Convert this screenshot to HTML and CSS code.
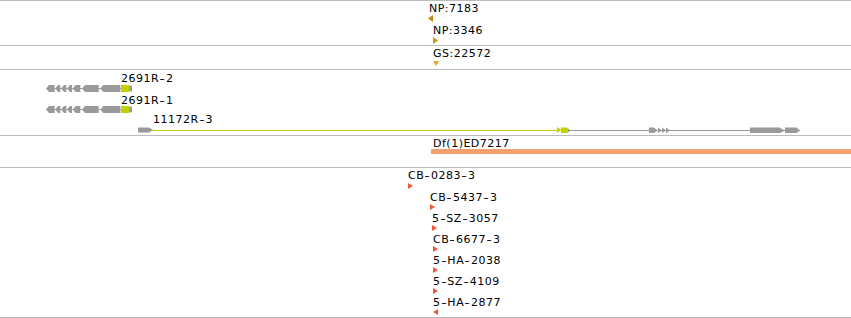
FILE: index.html
```html
<!DOCTYPE html>
<html lang="en">
<head>
    <meta charset="UTF-8">
    <title>Track view</title>
    <link rel="stylesheet" href="styles.css">
</head>
<body>
    <div class="panel">
        <!-- protein / genomic hits -->
        <div class="track t1">
            <span class="label" style="left:429px;top:0px">NP:7183</span>
            <svg class="mark" style="left:428px;top:14px" width="6" height="7"><polygon points="0,3.5 5,0 5,7" fill="#c8860a"/></svg>
            <span class="label" style="left:433px;top:22px">NP:3346</span>
            <svg class="mark" style="left:433px;top:36px" width="6" height="7"><polygon points="0,0 5,3.5 0,7" fill="#d4950e"/></svg>
        </div>

        <div class="track t2">
            <span class="label" style="left:433px;top:0px">GS:22572</span>
            <svg class="mark" style="left:433px;top:15px" width="6" height="6"><polygon points="0,0 6,0 3,5" fill="#f0a328"/></svg>
        </div>

        <!-- gene models -->
        <div class="track t3">
            <span class="label" style="left:121px;top:1px">2691R<span class="dash">-</span>2</span>
            <svg class="mark" style="left:44px;top:15px" width="90" height="7">
                <line x1="2" y1="3.5" x2="88" y2="3.5" stroke="#9a9a9a"/>
                <g fill="#9a9a9a">
                    <polygon points="2,3.5 5,0 10.7,0 10.7,7 5,7"/>
                    <polygon points="11.3,3.5 14,0 16.3,0 16.3,7 14,7"/>
                    <polygon points="17,3.5 20,0 22.3,0 22.3,7 20,7"/>
                    <polygon points="23,3.5 26,0 28,0 28,7 26,7"/>
                    <polygon points="28.7,3.5 31.7,0 36.3,0 36.3,7 31.7,7"/>
                    <polygon points="38,3.5 41,0 54.7,0 54.7,7 41,7"/>
                    <polygon points="56.3,3.5 59.3,0 76.3,0 76.3,7 59.3,7"/>
                    <polygon points="85,1 88,0.5 88,6.5 85,6"/>
                </g>
                <rect x="77" y="0" width="8.3" height="7" fill="#c3d100"/>
            </svg>
            <span class="label" style="left:121px;top:23px">2691R<span class="dash">-</span>1</span>
            <svg class="mark" style="left:44px;top:36px" width="90" height="7">
                <line x1="2" y1="3.5" x2="88" y2="3.5" stroke="#9a9a9a"/>
                <g fill="#9a9a9a">
                    <polygon points="2,3.5 5,0 10.7,0 10.7,7 5,7"/>
                    <polygon points="11.3,3.5 14,0 16.3,0 16.3,7 14,7"/>
                    <polygon points="17,3.5 20,0 22.3,0 22.3,7 20,7"/>
                    <polygon points="23,3.5 26,0 28,0 28,7 26,7"/>
                    <polygon points="28.7,3.5 31.7,0 36.3,0 36.3,7 31.7,7"/>
                    <polygon points="38,3.5 41,0 54.7,0 54.7,7 41,7"/>
                    <polygon points="56.3,3.5 59.3,0 76.3,0 76.3,7 59.3,7"/>
                    <polygon points="85,1 88,0.5 88,6.5 85,6"/>
                </g>
                <rect x="77" y="0" width="8.3" height="7" fill="#c3d100"/>
            </svg>
            <span class="label" style="left:153px;top:42px">11172R<span class="dash">-</span>3</span>
            <svg class="mark" style="left:0;top:54px" width="851" height="12">
                <line x1="148" y1="6.5" x2="557" y2="6.5" stroke="#c3d100"/>
                <line x1="570" y1="6.5" x2="800" y2="6.5" stroke="#9a9a9a"/>
                <polygon points="138,3.5 149,3.5 153,6 149,8.5 138,8.5" fill="#9a9a9a"/>
                <g fill="#c3d100">
                    <polygon points="557,3 561.5,6 557,9"/>
                    <rect x="561" y="3.5" width="6.5" height="5.5"/>
                </g>
                <g fill="#9a9a9a">
                    <polygon points="567.5,4 570.5,6.5 567.5,9"/>
                    <polygon points="649,3.5 654,3.5 657.5,6.5 654,9 649,9"/>
                    <polygon points="658,3.5 662,6.5 658,9"/>
                    <polygon points="662,3.5 666,6.5 662,9"/>
                    <polygon points="666,3.5 670,6.5 666,9"/>
                    <polygon points="750,3.5 780,3.5 780,4 785,6.5 780,9 750,9"/>
                    <polygon points="785,3.5 796.5,3.5 800,6.5 796.5,9 785,9"/>
                </g>
            </svg>
        </div>

        <!-- deficiency -->
        <div class="track t4">
            <span class="label" style="left:433px;top:0px">Df(1)ED7217</span>
            <div class="df-bar" style="left:431px;top:13px"></div>
        </div>

        <!-- insertions -->
        <div class="track t5">
            <span class="label" style="left:408px;top:0px">CB<span class="dash">-</span>0283<span class="dash">-</span>3</span>
            <svg class="mark" style="left:408px;top:15px" width="6" height="6"><polygon points="0,0 5,3 0,6" fill="#f0583a"/></svg>
            <span class="label" style="left:430px;top:22px">CB<span class="dash">-</span>5437<span class="dash">-</span>3</span>
            <svg class="mark" style="left:430px;top:36px" width="6" height="6"><polygon points="0,0 5,3 0,6" fill="#f0583a"/></svg>
            <span class="label" style="left:432px;top:43px">5<span class="dash">-</span>SZ<span class="dash">-</span>3057</span>
            <svg class="mark" style="left:432px;top:57px" width="6" height="6"><polygon points="0,0 5,3 0,6" fill="#f0583a"/></svg>
            <span class="label" style="left:433px;top:64px">CB<span class="dash">-</span>6677<span class="dash">-</span>3</span>
            <svg class="mark" style="left:433px;top:78px" width="6" height="6"><polygon points="0,0 5,3 0,6" fill="#f0583a"/></svg>
            <span class="label" style="left:433px;top:85px">5<span class="dash">-</span>HA<span class="dash">-</span>2038</span>
            <svg class="mark" style="left:433px;top:99px" width="6" height="6"><polygon points="0,0 5,3 0,6" fill="#f0583a"/></svg>
            <span class="label" style="left:433px;top:106px">5<span class="dash">-</span>SZ<span class="dash">-</span>4109</span>
            <svg class="mark" style="left:433px;top:120px" width="6" height="6"><polygon points="0,0 5,3 0,6" fill="#f0583a"/></svg>
            <span class="label" style="left:433px;top:127px">5<span class="dash">-</span>HA<span class="dash">-</span>2877</span>
            <svg class="mark" style="left:433px;top:141px" width="6" height="6"><polygon points="5,0 0,3 5,6" fill="#f0583a"/></svg>
        </div>
    </div>
</body>
</html>
```

FILE: styles.css
```css
body {
    margin: 0;
    padding: 0;
    background-color: #fff;
    font-family: "DejaVu Sans", Verdana, sans-serif;
}

.panel {
    width: 851px;
}

.track {
    position: relative;
    border-top: 1px solid #bbb;
}

.t1 { height: 44px; }
.t2 { height: 23px; }
.t3 { height: 65px; }
.t4 { height: 31px; }

.t5 {
    height: 149px;
    border-bottom: 1px solid #bbb;
}

.label {
    position: absolute;
    font-size: 11px;
    line-height: 15px;
    letter-spacing: 0.5px;
    color: #000;
    white-space: nowrap;
}

/* the dashes in feature names are drawn wider */
.dash {
    display: inline-block;
    padding: 0 1.2px;
    transform: scaleX(1.4);
}

.mark {
    position: absolute;
    display: block;
}

.df-bar {
    position: absolute;
    right: 0;
    height: 5px;
    background-color: #f2a06e;
}
```
